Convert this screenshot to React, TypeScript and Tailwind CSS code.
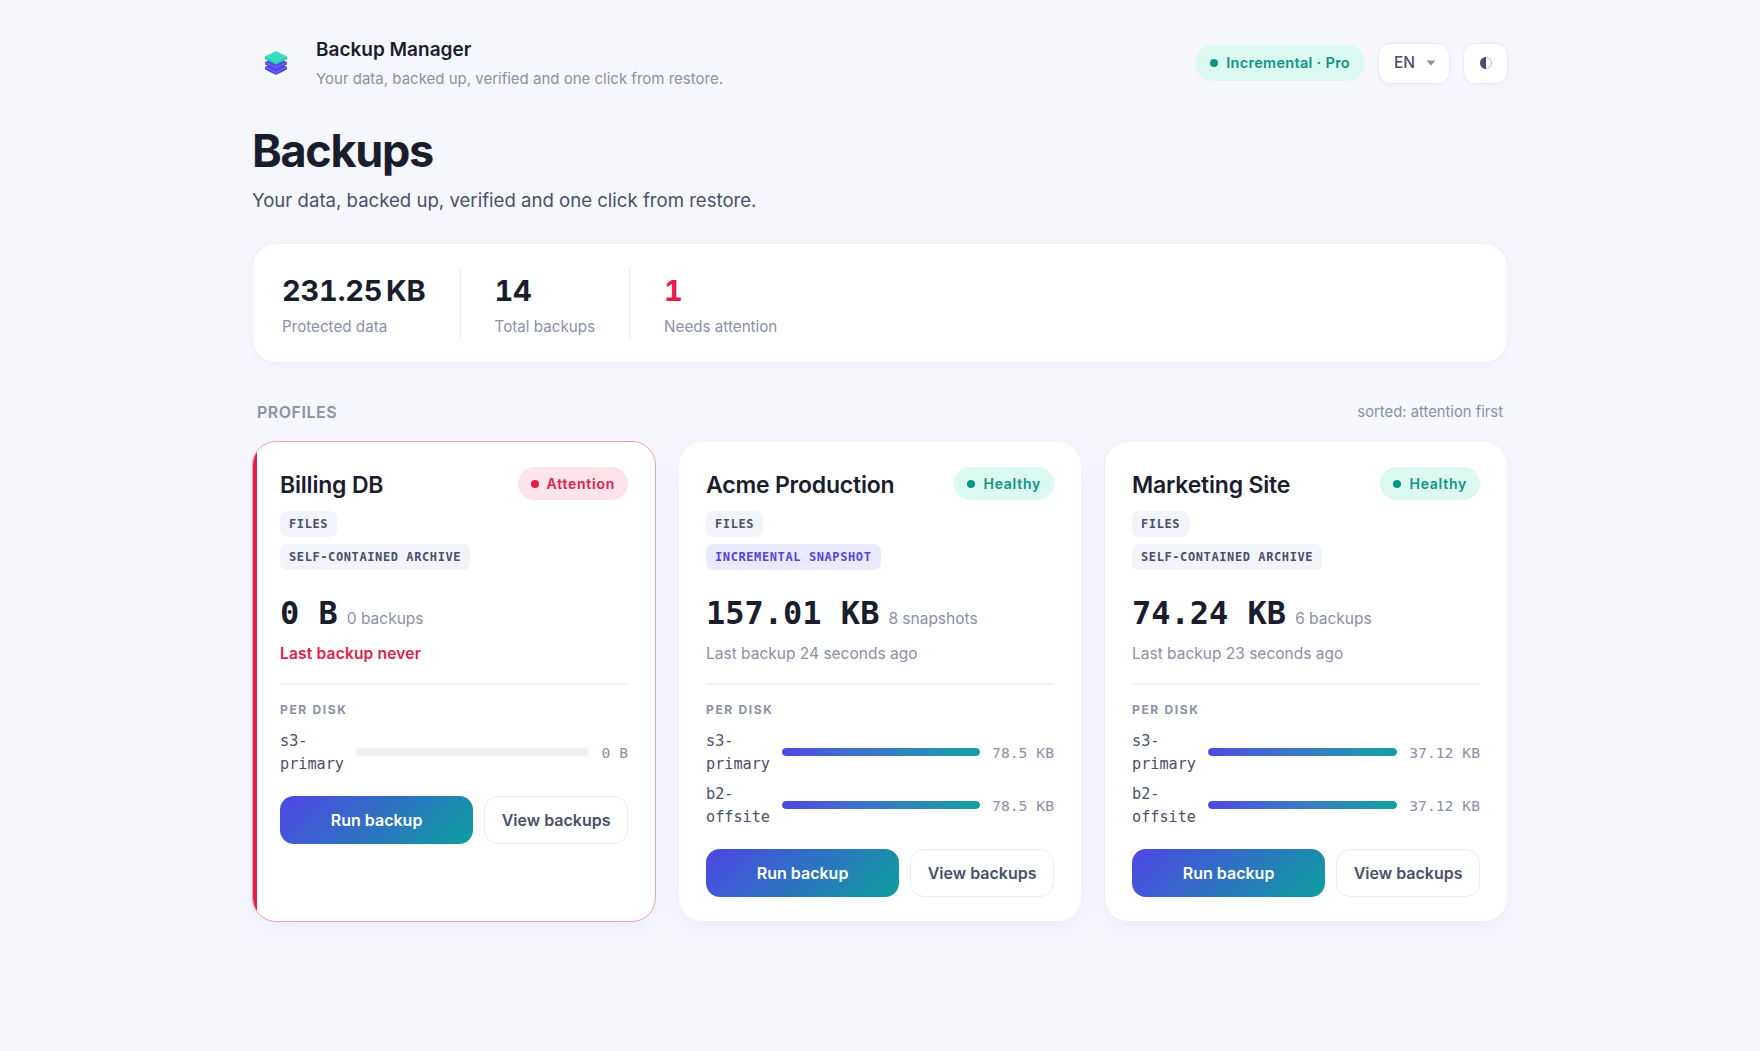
const sans = "font-['Inter','Liberation_Sans',sans-serif]";

function Logo() {
  return (
    <svg width="24" height="26" viewBox="0 0 24 26" className="block">
      <path d="M1 17 12 11.500 23 17v2.500L12 25 1 19.500Z" fill="#5048e6" />
      <path d="M1 17 12 22.500 23 17" fill="none" stroke="#7d76f2" strokeWidth="0.8" />
      <path d="M1 12 12 6.500 23 12v2.500L12 20 1 14.500Z" fill="#5048e6" />
      <path d="M1 12 12 17.500 23 12" fill="none" stroke="#7d76f2" strokeWidth="0.8" />
      <path d="M1 6.500 12 1l11 5.500V9L12 14.500 1 9Z" fill="#3adcbf" />
      <path d="M1 6.800 12 12.300 23 6.800V9L12 14.500 1 9Z" fill="#2fc9ae" />
    </svg>
  );
}

function Badge({ tone, label }: { tone: "red" | "green"; label: string }) {
  const red = tone === "red";
  return (
    <span
      className={`flex h-[33px] items-center gap-[8px] rounded-full px-[13px] text-[14px] font-semibold tracking-[0.75px] ${
        red ? "bg-[#fde4ea] text-[#e11d48]" : "bg-[#dcf9f1] text-[#0d9488]"
      }`}
    >
      <span className={`h-[8px] w-[8px] rounded-full ${red ? "bg-[#e11d48]" : "bg-[#0d9488]"}`} />
      {label}
    </span>
  );
}

function Tag({ label, accent }: { label: string; accent?: boolean }) {
  return (
    <span
      className={`flex h-[26px] w-fit items-center rounded-[7px] px-[9px] font-['DejaVu_Sans_Mono',monospace] text-[12px] font-bold tracking-[0.6px] ${
        accent ? "bg-[#ebe9fd] text-[#4f46e5]" : "bg-[#f3f4fa] text-[#4a4f6a]"
      }`}
    >
      {label}
    </span>
  );
}

type Disk = { name: string; value: string; pct: number };
type Profile = {
  name: string;
  attention?: boolean;
  tag: string;
  accent?: boolean;
  size: string;
  count: string;
  last: string;
  disks: Disk[];
};

const profiles: Profile[] = [
  {
    name: "Billing DB",
    attention: true,
    tag: "SELF-CONTAINED ARCHIVE",
    size: "0 B",
    count: "0 backups",
    last: "Last backup never",
    disks: [{ name: "s3-primary", value: "0 B", pct: 0 }],
  },
  {
    name: "Acme Production",
    tag: "INCREMENTAL SNAPSHOT",
    accent: true,
    size: "157.01 KB",
    count: "8 snapshots",
    last: "Last backup 24 seconds ago",
    disks: [
      { name: "s3-primary", value: "78.5 KB", pct: 100 },
      { name: "b2-offsite", value: "78.5 KB", pct: 100 },
    ],
  },
  {
    name: "Marketing Site",
    tag: "SELF-CONTAINED ARCHIVE",
    size: "74.24 KB",
    count: "6 backups",
    last: "Last backup 23 seconds ago",
    disks: [
      { name: "s3-primary", value: "37.12 KB", pct: 100 },
      { name: "b2-offsite", value: "37.12 KB", pct: 100 },
    ],
  },
];

function Card({ p }: { p: Profile }) {
  return (
    <div
      className={`relative overflow-hidden rounded-[24px] border bg-white px-[27px] pt-[25px] pb-[24px] shadow-[0_8px_24px_rgba(79,70,229,0.06)] ${
        p.attention ? "border-[#eba3b6]" : "border-[#f0f1f8]"
      }`}
    >
      {p.attention && <div className="absolute top-0 bottom-0 left-0 w-[4px] bg-[#e11d48]" />}
      <div className="flex items-start justify-between">
        <h3 className="mt-[2px] text-[23px] leading-[33px] font-semibold tracking-[-0.2px] text-[#1a1d2e]">{p.name}</h3>
        <Badge tone={p.attention ? "red" : "green"} label={p.attention ? "Attention" : "Healthy"} />
      </div>
      <div className="mt-[9px] flex flex-col gap-[7px]">
        <Tag label="FILES" />
        <Tag label={p.tag} accent={p.accent} />
      </div>
      <div className="mt-[21px] flex items-baseline gap-[9px]">
        <span className="font-['DejaVu_Sans_Mono',monospace] text-[32px] leading-[45px] font-bold text-[#1a1d2e]">
          {p.size}
        </span>
        <span className="text-[15.500px] text-[#8a90a8]">{p.count}</span>
      </div>
      <p
        className={`mt-[6px] text-[15.500px] leading-[24px] ${
          p.attention ? "font-semibold tracking-[0.2px] text-[#e11d48]" : "text-[#8a90a8]"
        }`}
      >
        {p.last}
      </p>
      <div className="mt-[17px] h-[2px] bg-[#f3f4fa]" />
      <div className="mt-[17px] text-[12px] leading-[16px] font-bold tracking-[1.65px] text-[#8a90a8]">PER DISK</div>
      <div className="mt-[12px] flex flex-col gap-[7px]">
        {p.disks.map((d) => (
          <div key={d.name} className="flex items-center gap-[12px] font-['DejaVu_Sans_Mono',monospace]">
            <span className="w-min text-[15.200px] leading-[23px] text-[#4a4f6a]">{d.name}</span>
            <div className="mb-[2px] h-[8px] flex-1 overflow-hidden rounded-full bg-[#eff1f9]">
              <div
                className="h-full rounded-full bg-gradient-to-r from-[#4f46e5] to-[#0d9f9f]"
                style={{ width: `${d.pct}%` }}
              />
            </div>
            <span className="text-[14.700px] whitespace-nowrap text-[#8a90a8]">{d.value}</span>
          </div>
        ))}
      </div>
      <div className="mt-[20px] flex gap-[11px]">
        <button className="h-[48px] flex-1 rounded-[14px] bg-[linear-gradient(135deg,#4f46e5,#0d9f9f)] text-[16px] font-semibold text-white">
          Run backup
        </button>
        <button className="h-[48px] rounded-[14px] border border-[#ebecf6] bg-white px-[16.500px] text-[16px] font-semibold text-[#4a4f6a]">
          View backups
        </button>
      </div>
    </div>
  );
}

function Stat({ value, label, red, divider }: { value: string; label: string; red?: boolean; divider?: boolean }) {
  return (
    <div className={`flex flex-col pr-[34px] ${divider ? "mr-[34px] border-r border-[#e8eaf4]" : ""}`}>
      <span
        className={`pt-[3px] text-[29px] leading-[40px] font-bold tracking-[-0.2px] tabular-nums [word-spacing:-4px] ${
          red ? "text-[#e11d48]" : "text-[#1a1d2e]"
        }`}
      >
        {value}
      </span>
      <span className="mt-[4px] text-[15.200px] leading-[24px] text-[#8a90a8]">{label}</span>
    </div>
  );
}

export default function App() {
  return (
    <div className={`min-h-[1051px] bg-[#f6f7fc] ${sans}`}>
      <div className="mx-auto w-[1256px] pt-[36px]">
        <header className="flex items-center justify-between">
          <div className="flex items-center">
            <div className="ml-[12px] flex w-[52px] justify-start">
              <Logo />
            </div>
            <div>
              <div className="text-[19px] leading-[27px] font-semibold text-[#1a1d2e]">Backup Manager</div>
              <div className="mt-[5px] text-[15px] leading-[22px] text-[#8a90a8]">
                Your data, backed up, verified and one click from restore.
              </div>
            </div>
          </div>
          <div className="flex items-center gap-[13px]">
            <span className="flex h-[36px] items-center gap-[8px] rounded-full bg-[#dcf9f1] px-[15px] text-[14.500px] font-semibold tracking-[0.3px] text-[#0d9488]">
              <span className="h-[8px] w-[8px] rounded-full bg-[#0d9488]" />
              Incremental · Pro
            </span>
            <div className="flex h-[41px] w-[72px] items-center justify-between rounded-[12px] border border-[#e8eaf4] bg-white pr-[13px] pl-[15px] text-[15.500px] font-medium text-[#4a4f6a] shadow-[0_1px_3px_rgba(79,70,229,0.06)]">
              EN
              <svg width="10" height="6" viewBox="0 0 10 6">
                <path d="M0.500 0.500h9L5 5.500Z" fill="#8a90a8" />
              </svg>
            </div>
            <div className="flex h-[41px] w-[45px] items-center justify-center rounded-[12px] border border-[#e8eaf4] bg-white shadow-[0_1px_3px_rgba(79,70,229,0.06)]">
              <svg width="14" height="14" viewBox="0 0 14 14">
                <circle cx="7" cy="7" r="5.500" fill="none" stroke="#b9bdd0" strokeWidth="1" />
                <path d="M7 1a6 6 0 0 0 0 12Z" fill="#4a4f6a" />
              </svg>
            </div>
          </div>
        </header>

        <h1 className="mt-[30px] text-[45px] leading-[62px] font-bold tracking-[-1.3px] text-[#1a1d2e]">Backups</h1>
        <p className="mt-[3px] text-[18.600px] leading-[30px] text-[#4a4f6a]">
          Your data, backed up, verified and one click from restore.
        </p>

        <section className="mt-[28px] flex h-[120px] items-center rounded-[24px] border border-[#eef0f8] bg-white pl-[29px] shadow-[0_2px_6px_rgba(79,70,229,0.05)]">
          <Stat value="231.25 KB" label="Protected data" divider />
          <Stat value="14" label="Total backups" divider />
          <Stat value="1" label="Needs attention" red />
        </section>

        <div className="mt-[37px] mb-[17px] flex items-center justify-between px-[5px]">
          <span className="text-[16px] leading-[24px] font-semibold tracking-[0.5px] text-[#8a90a8]">PROFILES</span>
          <span className="text-[14.800px] leading-[24px] text-[#8a90a8]">sorted: attention first</span>
        </div>

        <div className="grid grid-cols-3 gap-[22px]">
          {profiles.map((p) => (
            <Card key={p.name} p={p} />
          ))}
        </div>
      </div>
    </div>
  );
}
